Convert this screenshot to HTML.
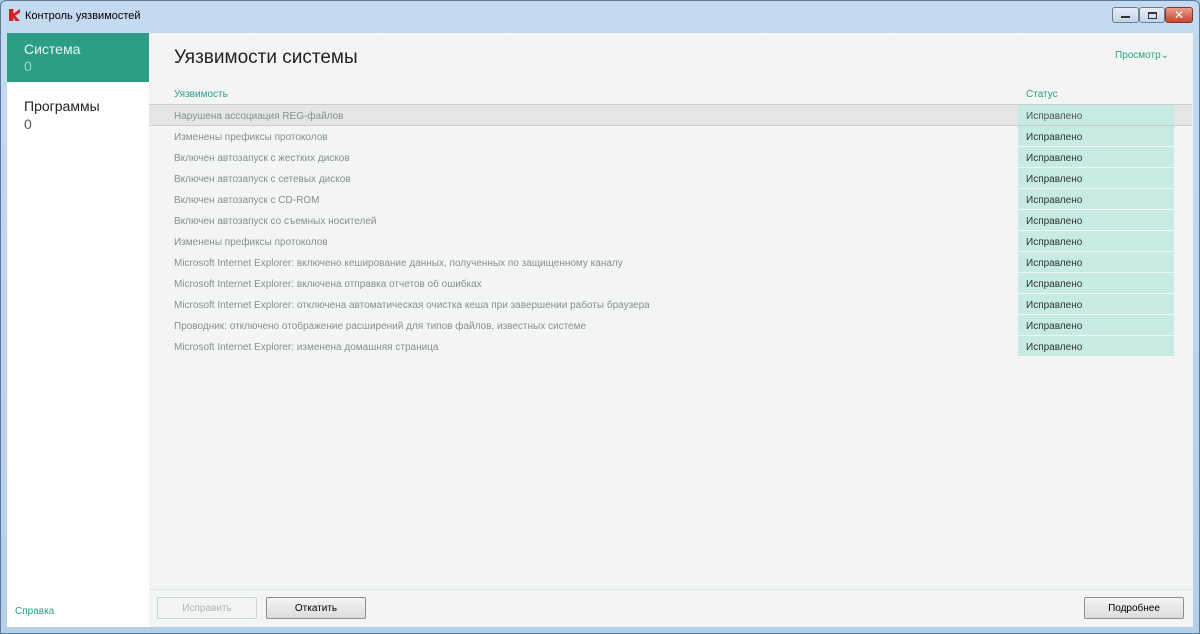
<!DOCTYPE html><html><head><meta charset="utf-8"><style>
*{margin:0;padding:0;box-sizing:border-box}
body{width:1200px;height:634px;overflow:hidden;background:#a9c8e4;font-family:"Liberation Sans","DejaVu Sans",sans-serif;position:relative}
.frame{position:absolute;left:0;top:0;width:1200px;height:634px;background:linear-gradient(#c4daf0,#b5cfe8);border:1px solid #5a7a99;border-radius:6px 6px 0 0}
.title{position:absolute;left:25px;top:10px;font-size:11px;color:#000}
.sb{position:absolute;left:7px;top:33px;width:142px;height:594px;background:#fff}
.main{position:absolute;left:149px;top:33px;width:1044px;height:594px;background:#f2f5f4}
.sel{position:absolute;left:7px;top:33px;width:142px;height:49px;background:#2c9e85;color:#e6f5f1;font-size:14px;padding:8px 0 0 17px;line-height:17px}
.sel span{color:#9fd6c8}
.item{position:absolute;left:24px;top:97px;font-size:14px;color:#222;line-height:18px}
.item span{color:#555}
.h1{position:absolute;left:174px;top:47px;font-size:19px;color:#222}
.teal{color:#2c9e85}
.row{position:absolute;left:149px;width:1043px;height:20px;font-size:10px;color:#8a8e8d}
.row .t{position:absolute;left:25px;top:6px}
.row .s{position:absolute;left:869px;top:0;width:156px;height:20px;background:#c5ebe2;color:#333;padding:6px 0 0 8px}
.btn{position:absolute;top:597px;height:22px;border:1px solid #8e8f8f;border-radius:2px;background:linear-gradient(#f4f4f4,#dcdcdc);font-size:10px;text-align:center;line-height:22px;color:#000}
</style></head><body>
<div class="frame"></div>
<div style="position:absolute;left:9px;top:9px;width:11px;height:12px;background:#d02020;clip-path:polygon(0 0,40% 0,40% 40%,100% 0,100% 30%,55% 55%,100% 100%,60% 100%,40% 70%,40% 100%,0 100%)"></div>
<div class="title">Контроль уязвимостей</div>
<div style="position:absolute;left:1112px;top:7px;width:27px;height:16px;border:1px solid #6b7f94;border-radius:3px;background:linear-gradient(#e6eef7,#c3d3e4)"><div style="position:absolute;left:8px;top:8px;width:9px;height:2px;background:#333"></div></div>
<div style="position:absolute;left:1139px;top:7px;width:26px;height:16px;border:1px solid #6b7f94;border-radius:3px;background:linear-gradient(#e6eef7,#c3d3e4)"><div style="position:absolute;left:8px;top:4px;width:9px;height:7px;border:1px solid #333;border-top-width:2px"></div></div>
<div style="position:absolute;left:1165px;top:7px;width:28px;height:16px;border:1px solid #7a3a2c;border-radius:3px;background:linear-gradient(#e9a08e,#c8442a);color:#fff;font-size:12px;font-weight:bold;text-align:center;line-height:14px">✕</div>
<div class="sb"></div><div class="main"></div>
<div class="sel">Система<br><span>0</span></div>
<div class="item">Программы<br><span>0</span></div>
<div style="position:absolute;left:15px;top:606px;font-size:10px" class="teal">Справка</div>
<div class="h1">Уязвимости системы</div>
<div style="position:absolute;left:1115px;top:50px;font-size:10px" class="teal">Просмотр⌄</div>
<div style="position:absolute;left:174px;top:89px;font-size:10px" class="teal">Уязвимость</div>
<div style="position:absolute;left:1026px;top:89px;font-size:10px" class="teal">Статус</div>
<div style="position:absolute;left:149px;top:104px;width:1043px;height:22px;background:#e4e6e5;border-top:1px solid #c9cccb;border-bottom:1px solid #c9cccb"></div>
<div class="row" style="top:105px"><span class="t">Нарушена ассоциация REG-файлов</span><span class="s" style="color:#555">Исправлено</span></div>
<div class="row" style="top:126px"><span class="t">Изменены префиксы протоколов</span><span class="s">Исправлено</span></div>
<div class="row" style="top:147px"><span class="t">Включен автозапуск с жестких дисков</span><span class="s">Исправлено</span></div>
<div class="row" style="top:168px"><span class="t">Включен автозапуск с сетевых дисков</span><span class="s">Исправлено</span></div>
<div class="row" style="top:189px"><span class="t">Включен автозапуск с CD-ROM</span><span class="s">Исправлено</span></div>
<div class="row" style="top:210px"><span class="t">Включен автозапуск со съемных носителей</span><span class="s">Исправлено</span></div>
<div class="row" style="top:231px"><span class="t">Изменены префиксы протоколов</span><span class="s">Исправлено</span></div>
<div class="row" style="top:252px"><span class="t">Microsoft Internet Explorer: включено кеширование данных, полученных по защищенному каналу</span><span class="s">Исправлено</span></div>
<div class="row" style="top:273px"><span class="t">Microsoft Internet Explorer: включена отправка отчетов об ошибках</span><span class="s">Исправлено</span></div>
<div class="row" style="top:294px"><span class="t">Microsoft Internet Explorer: отключена автоматическая очистка кеша при завершении работы браузера</span><span class="s">Исправлено</span></div>
<div class="row" style="top:315px"><span class="t">Проводник: отключено отображение расширений для типов файлов, известных системе</span><span class="s">Исправлено</span></div>
<div class="row" style="top:336px"><span class="t">Microsoft Internet Explorer: изменена домашняя страница</span><span class="s">Исправлено</span></div>
<div style="position:absolute;left:149px;top:589px;width:1044px;height:1px;background:#e2e6e5"></div>
<div class="btn" style="left:157px;width:100px;border-color:#d0d3d3;background:#f2f4f4;color:#b0b3b3">Исправить</div>
<div class="btn" style="left:266px;width:100px">Откатить</div>
<div class="btn" style="left:1084px;width:100px">Подробнее</div>
</body></html>
